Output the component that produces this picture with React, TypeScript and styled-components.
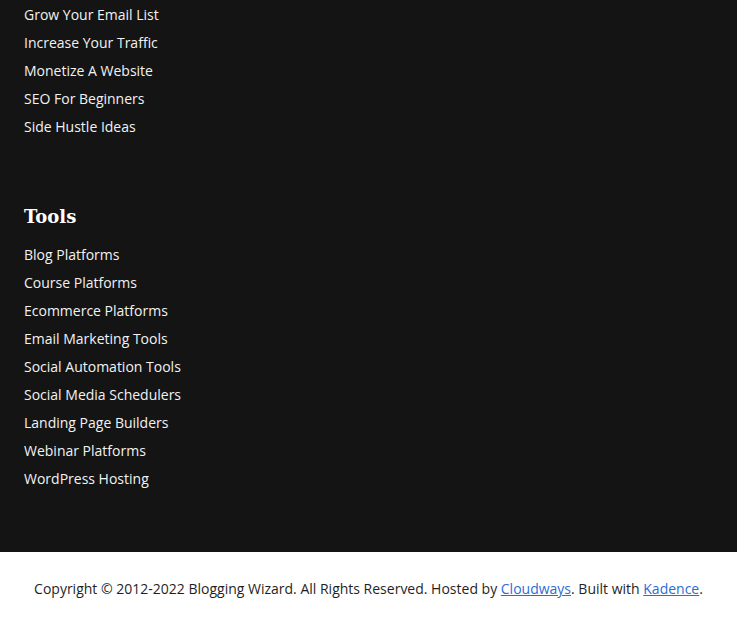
import styled, { createGlobalStyle } from "styled-components";

const GlobalStyle = createGlobalStyle`
    html, body {
        margin: 0;
        padding: 0;
        background: #ffffff;
    }
    body {
        font-family: "Open Sans", "Liberation Sans", sans-serif;
    }
`;

const FooterTop = styled.section`
    background: #141414;
    padding: 1px 24px 59px;
`;

const Widget = styled.div`
    & + & {
        margin-top: 61px;
    }
`;

const WidgetTitle = styled.h2`
    margin: 0 0 9px;
    font-family: "DejaVu Serif", "Liberation Serif", serif;
    font-weight: 700;
    font-size: 18px;
    line-height: 30px;
    color: #ffffff;
`;

const LinkList = styled.ul`
    list-style: none;
    margin: 0;
    padding: 0;
`;

const LinkItem = styled.li`
    font-size: 14px;
    line-height: 28px;

    a {
        color: #f2f2f2;
        text-decoration: none;
    }
`;

const FooterBottom = styled.footer`
    background: #ffffff;
    height: 74px;
    display: flex;
    align-items: center;
    justify-content: center;
    font-size: 14px;
    color: #1f1f1f;
`;

const Credit = styled.p`
    margin: 0;
    line-height: 20px;
    text-align: center;

    a {
        color: #2b6cd6;
        text-decoration: underline;
    }
`;

const guides = [
    "Grow Your Email List",
    "Increase Your Traffic",
    "Monetize A Website",
    "SEO For Beginners",
    "Side Hustle Ideas",
];

const tools = [
    "Blog Platforms",
    "Course Platforms",
    "Ecommerce Platforms",
    "Email Marketing Tools",
    "Social Automation Tools",
    "Social Media Schedulers",
    "Landing Page Builders",
    "Webinar Platforms",
    "WordPress Hosting",
];

export default function App() {
    return (
        <>
            <GlobalStyle />
            <FooterTop>
                <Widget>
                    <LinkList>
                        {guides.map((g) => (
                            <LinkItem key={g}>
                                <a href='#'>{g}</a>
                            </LinkItem>
                        ))}
                    </LinkList>
                </Widget>
                <Widget>
                    <WidgetTitle>Tools</WidgetTitle>
                    <LinkList>
                        {tools.map((t) => (
                            <LinkItem key={t}>
                                <a href='#'>{t}</a>
                            </LinkItem>
                        ))}
                    </LinkList>
                </Widget>
            </FooterTop>
            <FooterBottom>
                <Credit>
                    Copyright © 2012-2022 Blogging Wizard. All Rights Reserved.
                    Hosted by <a href='#'>Cloudways</a>. Built with{" "}
                    <a href='#'>Kadence</a>.
                </Credit>
            </FooterBottom>
        </>
    );
}
